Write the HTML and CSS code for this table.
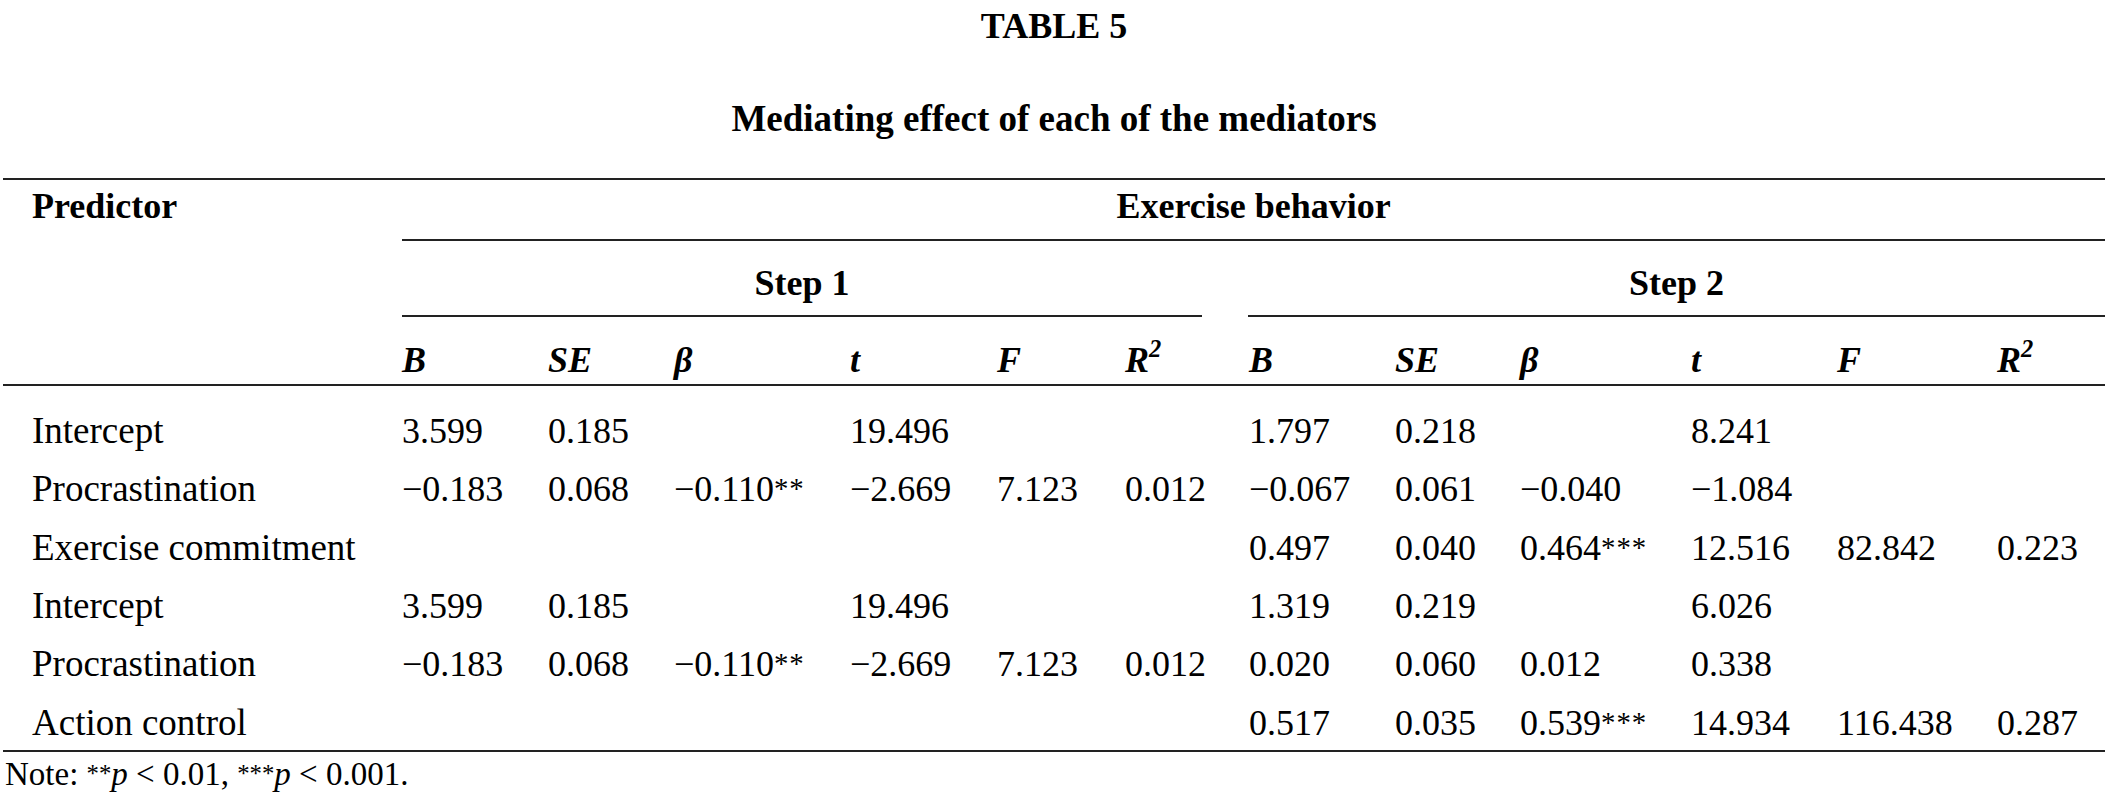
FILE: index.html
```html
<!DOCTYPE html>
<html lang="en">
<head>
<meta charset="utf-8">
<title>Table 5</title>
<link rel="stylesheet" href="styles.css">
</head>
<body>
<div class="page">
  <div class="label">TABLE 5</div>
  <div class="caption">Mediating effect of each of the mediators</div>
  <table class="tbl">
    <colgroup>
      <col class="c0"><col class="w146"><col class="w126"><col class="w176"><col class="w147"><col class="w128"><col class="w124"><col class="w146"><col class="w125"><col class="w171"><col class="w146"><col class="w160"><col class="w108">
    </colgroup>
    <thead>
      <tr class="ra">
        <th class="pred" rowspan="3">Predictor</th>
        <th class="eb" colspan="12">Exercise behavior</th>
      </tr>
      <tr class="rb">
        <th class="step" colspan="6"><div class="step-rule s1">Step 1</div></th>
        <th class="step" colspan="6"><div class="step-rule s2">Step 2</div></th>
      </tr>
      <tr class="rc">
        <th>B</th><th>SE</th><th>β</th><th>t</th><th>F</th><th>R<span class="sq">2</span></th>
        <th>B</th><th>SE</th><th>β</th><th>t</th><th>F</th><th>R<span class="sq">2</span></th>
      </tr>
    </thead>
    <tbody>
      <tr>
        <td class="name">Intercept</td>
        <td>3.599</td><td>0.185</td><td></td><td>19.496</td><td></td><td></td>
        <td>1.797</td><td>0.218</td><td></td><td>8.241</td><td></td><td></td>
      </tr>
      <tr>
        <td class="name">Procrastination</td>
        <td>−0.183</td><td>0.068</td><td>−0.110<span class="sig">**</span></td><td>−2.669</td><td>7.123</td><td>0.012</td>
        <td>−0.067</td><td>0.061</td><td>−0.040</td><td>−1.084</td><td></td><td></td>
      </tr>
      <tr>
        <td class="name">Exercise commitment</td>
        <td></td><td></td><td></td><td></td><td></td><td></td>
        <td>0.497</td><td>0.040</td><td>0.464<span class="sig">***</span></td><td>12.516</td><td>82.842</td><td>0.223</td>
      </tr>
      <tr>
        <td class="name">Intercept</td>
        <td>3.599</td><td>0.185</td><td></td><td>19.496</td><td></td><td></td>
        <td>1.319</td><td>0.219</td><td></td><td>6.026</td><td></td><td></td>
      </tr>
      <tr>
        <td class="name">Procrastination</td>
        <td>−0.183</td><td>0.068</td><td>−0.110<span class="sig">**</span></td><td>−2.669</td><td>7.123</td><td>0.012</td>
        <td>0.020</td><td>0.060</td><td>0.012</td><td>0.338</td><td></td><td></td>
      </tr>
      <tr>
        <td class="name">Action control</td>
        <td></td><td></td><td></td><td></td><td></td><td></td>
        <td>0.517</td><td>0.035</td><td>0.539<span class="sig">***</span></td><td>14.934</td><td>116.438</td><td>0.287</td>
      </tr>
    </tbody>
  </table>
  <div class="note">Note: <span class="nsig">**</span><i>p</i> &lt; 0.01, <span class="nsig">***</span><i>p</i> &lt; 0.001.</div>
</div>
</body>
</html>
```
FILE: styles.css
```css
html, body {
  margin: 0;
  padding: 0;
  background: #ffffff;
}

body {
  font-family: "Liberation Serif", "Times New Roman", serif;
  color: #000;
  font-size: 36px;
}

.page {
  width: 2108px;
}

.label {
  text-align: center;
  font-weight: bold;
  line-height: 32px;
  padding-top: 10px;
}

.caption {
  text-align: center;
  font-weight: bold;
  font-size: 37px;
  line-height: 32px;
  margin-top: 61px;
}

.tbl {
  margin: 43px 3px 0 3px;
  width: 2102px;
  table-layout: fixed;
  border-collapse: separate;
  border-spacing: 0;
  border-top: 2px solid #222;
  border-bottom: 2px solid #222;
}

.c0 { width: 399px; }
.w146 { width: 146px; }
.w126 { width: 126px; }
.w176 { width: 176px; }
.w147 { width: 147px; }
.w128 { width: 128px; }
.w124 { width: 124px; }
.w125 { width: 125px; }
.w171 { width: 171px; }
.w160 { width: 160px; }
.w108 { width: 108px; }

.tbl th,
.tbl td {
  padding: 0;
  text-align: left;
  line-height: 40px;
  white-space: nowrap;
  vertical-align: top;
}

.tbl th {
  font-weight: bold;
}

.tbl th.pred {
  padding: 6px 0 0 29px;
  border-bottom: 2px solid #222;
}

.tbl th.eb {
  text-align: center;
  padding: 6px 0 13px 0;
  border-bottom: 2px solid #222;
}

.tbl th.step {
  padding-top: 22px;
}

.step-rule {
  text-align: center;
  padding-bottom: 12px;
  border-bottom: 2px solid #222;
}

.step-rule.s1 {
  margin-right: 47px;
}

.step-rule.s2 {
  margin-left: -1px;
}

.rc th {
  font-style: italic;
  padding: 23px 0 4px 0;
  border-bottom: 2px solid #222;
}

.sq {
  font-size: 0.68em;
  vertical-align: 0.62em;
  line-height: 0;
}

.tbl td {
  padding: 9.2px 0 9.2px 0;
}

.tbl td.name {
  padding-left: 29px;
  font-size: 37px;
}

.tbl tbody tr:first-child td {
  padding-top: 24.8px;
}

.tbl tbody tr:last-child td {
  padding-bottom: 7px;
}

.sig {
  font-size: 0.8em;
  vertical-align: 0.12em;
  line-height: 0;
  letter-spacing: 1px;
}

.note {
  font-size: 33px;
  line-height: 40px;
  margin: 2px 0 0 5px;
}

.nsig {
  font-size: 0.75em;
  vertical-align: 0.12em;
  line-height: 0;
}
```
